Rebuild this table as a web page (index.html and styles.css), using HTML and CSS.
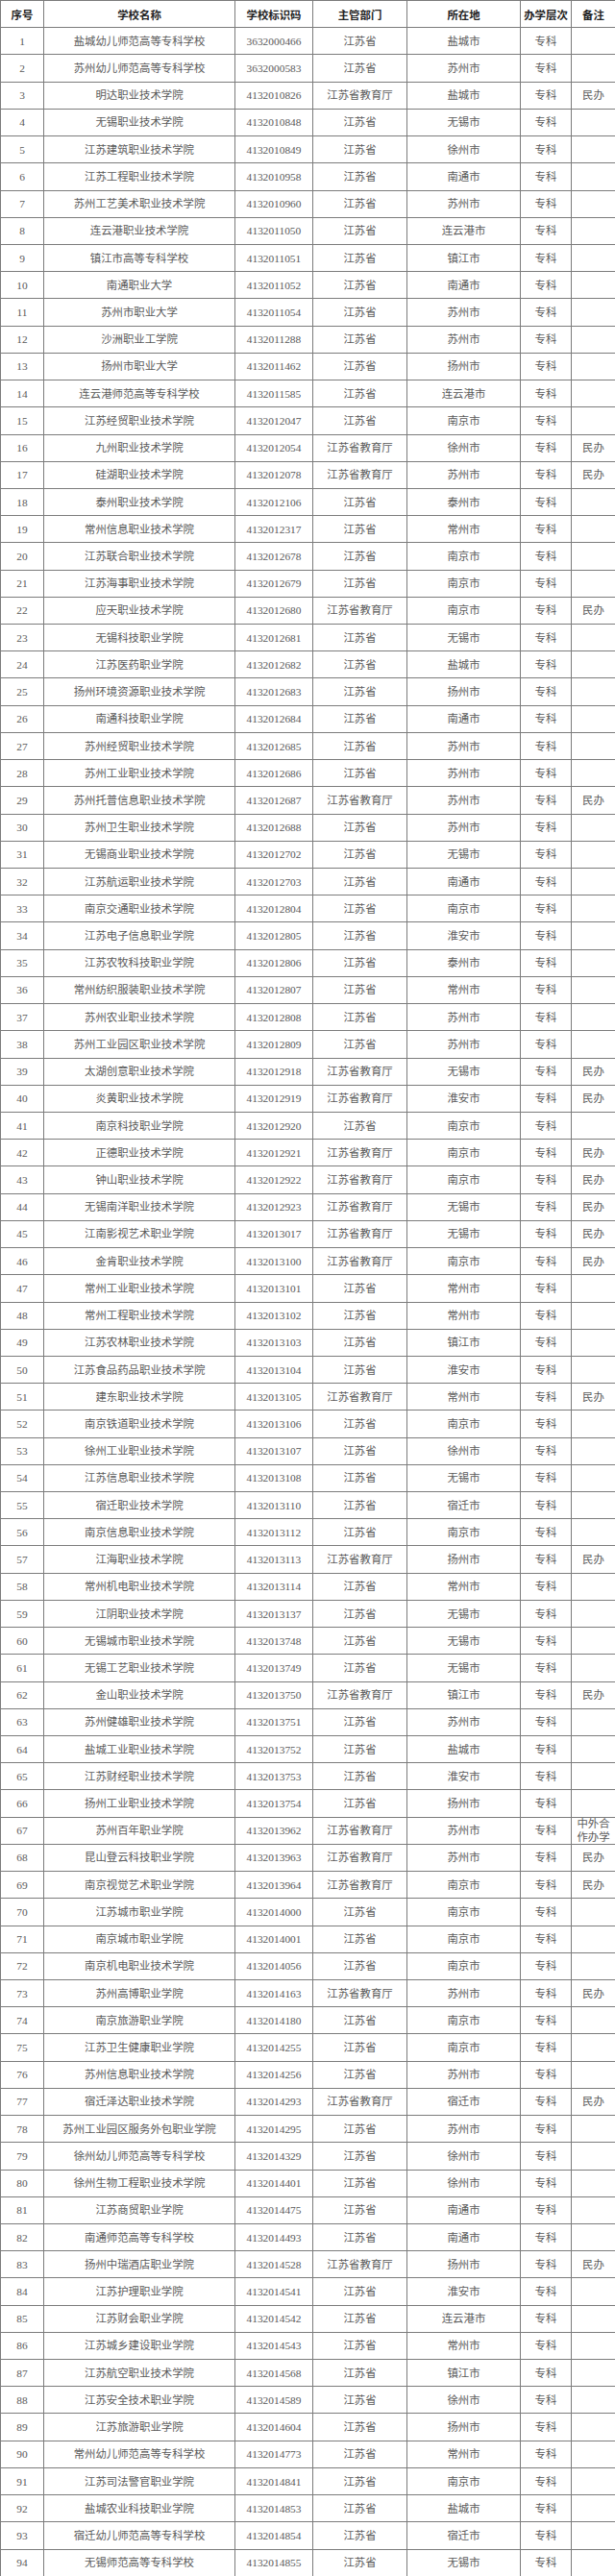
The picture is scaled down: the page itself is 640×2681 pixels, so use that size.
FILE: index.html
```html
<!DOCTYPE html>
<html lang="zh-CN">
<head>
<meta charset="utf-8">
<title>江苏省高职（专科）院校名单</title>
<link rel="stylesheet" href="styles.css">
</head>
<body>
<table class="list">
<colgroup>
<col class="c-no"><col class="c-name"><col class="c-code"><col class="c-dept"><col class="c-city"><col class="c-level"><col class="c-note">
</colgroup>
<thead>
<tr><th>序号</th><th>学校名称</th><th>学校标识码</th><th>主管部门</th><th>所在地</th><th>办学层次</th><th>备注</th></tr>
</thead>
<tbody>
<tr><td>1</td><td>盐城幼儿师范高等专科学校</td><td>3632000466</td><td>江苏省</td><td>盐城市</td><td>专科</td><td></td></tr>
<tr><td>2</td><td>苏州幼儿师范高等专科学校</td><td>3632000583</td><td>江苏省</td><td>苏州市</td><td>专科</td><td></td></tr>
<tr><td>3</td><td>明达职业技术学院</td><td>4132010826</td><td>江苏省教育厅</td><td>盐城市</td><td>专科</td><td>民办</td></tr>
<tr><td>4</td><td>无锡职业技术学院</td><td>4132010848</td><td>江苏省</td><td>无锡市</td><td>专科</td><td></td></tr>
<tr><td>5</td><td>江苏建筑职业技术学院</td><td>4132010849</td><td>江苏省</td><td>徐州市</td><td>专科</td><td></td></tr>
<tr><td>6</td><td>江苏工程职业技术学院</td><td>4132010958</td><td>江苏省</td><td>南通市</td><td>专科</td><td></td></tr>
<tr><td>7</td><td>苏州工艺美术职业技术学院</td><td>4132010960</td><td>江苏省</td><td>苏州市</td><td>专科</td><td></td></tr>
<tr><td>8</td><td>连云港职业技术学院</td><td>4132011050</td><td>江苏省</td><td>连云港市</td><td>专科</td><td></td></tr>
<tr><td>9</td><td>镇江市高等专科学校</td><td>4132011051</td><td>江苏省</td><td>镇江市</td><td>专科</td><td></td></tr>
<tr><td>10</td><td>南通职业大学</td><td>4132011052</td><td>江苏省</td><td>南通市</td><td>专科</td><td></td></tr>
<tr><td>11</td><td>苏州市职业大学</td><td>4132011054</td><td>江苏省</td><td>苏州市</td><td>专科</td><td></td></tr>
<tr><td>12</td><td>沙洲职业工学院</td><td>4132011288</td><td>江苏省</td><td>苏州市</td><td>专科</td><td></td></tr>
<tr><td>13</td><td>扬州市职业大学</td><td>4132011462</td><td>江苏省</td><td>扬州市</td><td>专科</td><td></td></tr>
<tr><td>14</td><td>连云港师范高等专科学校</td><td>4132011585</td><td>江苏省</td><td>连云港市</td><td>专科</td><td></td></tr>
<tr><td>15</td><td>江苏经贸职业技术学院</td><td>4132012047</td><td>江苏省</td><td>南京市</td><td>专科</td><td></td></tr>
<tr><td>16</td><td>九州职业技术学院</td><td>4132012054</td><td>江苏省教育厅</td><td>徐州市</td><td>专科</td><td>民办</td></tr>
<tr><td>17</td><td>硅湖职业技术学院</td><td>4132012078</td><td>江苏省教育厅</td><td>苏州市</td><td>专科</td><td>民办</td></tr>
<tr><td>18</td><td>泰州职业技术学院</td><td>4132012106</td><td>江苏省</td><td>泰州市</td><td>专科</td><td></td></tr>
<tr><td>19</td><td>常州信息职业技术学院</td><td>4132012317</td><td>江苏省</td><td>常州市</td><td>专科</td><td></td></tr>
<tr><td>20</td><td>江苏联合职业技术学院</td><td>4132012678</td><td>江苏省</td><td>南京市</td><td>专科</td><td></td></tr>
<tr><td>21</td><td>江苏海事职业技术学院</td><td>4132012679</td><td>江苏省</td><td>南京市</td><td>专科</td><td></td></tr>
<tr><td>22</td><td>应天职业技术学院</td><td>4132012680</td><td>江苏省教育厅</td><td>南京市</td><td>专科</td><td>民办</td></tr>
<tr><td>23</td><td>无锡科技职业学院</td><td>4132012681</td><td>江苏省</td><td>无锡市</td><td>专科</td><td></td></tr>
<tr><td>24</td><td>江苏医药职业学院</td><td>4132012682</td><td>江苏省</td><td>盐城市</td><td>专科</td><td></td></tr>
<tr><td>25</td><td>扬州环境资源职业技术学院</td><td>4132012683</td><td>江苏省</td><td>扬州市</td><td>专科</td><td></td></tr>
<tr><td>26</td><td>南通科技职业学院</td><td>4132012684</td><td>江苏省</td><td>南通市</td><td>专科</td><td></td></tr>
<tr><td>27</td><td>苏州经贸职业技术学院</td><td>4132012685</td><td>江苏省</td><td>苏州市</td><td>专科</td><td></td></tr>
<tr><td>28</td><td>苏州工业职业技术学院</td><td>4132012686</td><td>江苏省</td><td>苏州市</td><td>专科</td><td></td></tr>
<tr><td>29</td><td>苏州托普信息职业技术学院</td><td>4132012687</td><td>江苏省教育厅</td><td>苏州市</td><td>专科</td><td>民办</td></tr>
<tr><td>30</td><td>苏州卫生职业技术学院</td><td>4132012688</td><td>江苏省</td><td>苏州市</td><td>专科</td><td></td></tr>
<tr><td>31</td><td>无锡商业职业技术学院</td><td>4132012702</td><td>江苏省</td><td>无锡市</td><td>专科</td><td></td></tr>
<tr><td>32</td><td>江苏航运职业技术学院</td><td>4132012703</td><td>江苏省</td><td>南通市</td><td>专科</td><td></td></tr>
<tr><td>33</td><td>南京交通职业技术学院</td><td>4132012804</td><td>江苏省</td><td>南京市</td><td>专科</td><td></td></tr>
<tr><td>34</td><td>江苏电子信息职业学院</td><td>4132012805</td><td>江苏省</td><td>淮安市</td><td>专科</td><td></td></tr>
<tr><td>35</td><td>江苏农牧科技职业学院</td><td>4132012806</td><td>江苏省</td><td>泰州市</td><td>专科</td><td></td></tr>
<tr><td>36</td><td>常州纺织服装职业技术学院</td><td>4132012807</td><td>江苏省</td><td>常州市</td><td>专科</td><td></td></tr>
<tr><td>37</td><td>苏州农业职业技术学院</td><td>4132012808</td><td>江苏省</td><td>苏州市</td><td>专科</td><td></td></tr>
<tr><td>38</td><td>苏州工业园区职业技术学院</td><td>4132012809</td><td>江苏省</td><td>苏州市</td><td>专科</td><td></td></tr>
<tr><td>39</td><td>太湖创意职业技术学院</td><td>4132012918</td><td>江苏省教育厅</td><td>无锡市</td><td>专科</td><td>民办</td></tr>
<tr><td>40</td><td>炎黄职业技术学院</td><td>4132012919</td><td>江苏省教育厅</td><td>淮安市</td><td>专科</td><td>民办</td></tr>
<tr><td>41</td><td>南京科技职业学院</td><td>4132012920</td><td>江苏省</td><td>南京市</td><td>专科</td><td></td></tr>
<tr><td>42</td><td>正德职业技术学院</td><td>4132012921</td><td>江苏省教育厅</td><td>南京市</td><td>专科</td><td>民办</td></tr>
<tr><td>43</td><td>钟山职业技术学院</td><td>4132012922</td><td>江苏省教育厅</td><td>南京市</td><td>专科</td><td>民办</td></tr>
<tr><td>44</td><td>无锡南洋职业技术学院</td><td>4132012923</td><td>江苏省教育厅</td><td>无锡市</td><td>专科</td><td>民办</td></tr>
<tr><td>45</td><td>江南影视艺术职业学院</td><td>4132013017</td><td>江苏省教育厅</td><td>无锡市</td><td>专科</td><td>民办</td></tr>
<tr><td>46</td><td>金肯职业技术学院</td><td>4132013100</td><td>江苏省教育厅</td><td>南京市</td><td>专科</td><td>民办</td></tr>
<tr><td>47</td><td>常州工业职业技术学院</td><td>4132013101</td><td>江苏省</td><td>常州市</td><td>专科</td><td></td></tr>
<tr><td>48</td><td>常州工程职业技术学院</td><td>4132013102</td><td>江苏省</td><td>常州市</td><td>专科</td><td></td></tr>
<tr><td>49</td><td>江苏农林职业技术学院</td><td>4132013103</td><td>江苏省</td><td>镇江市</td><td>专科</td><td></td></tr>
<tr><td>50</td><td>江苏食品药品职业技术学院</td><td>4132013104</td><td>江苏省</td><td>淮安市</td><td>专科</td><td></td></tr>
<tr><td>51</td><td>建东职业技术学院</td><td>4132013105</td><td>江苏省教育厅</td><td>常州市</td><td>专科</td><td>民办</td></tr>
<tr><td>52</td><td>南京铁道职业技术学院</td><td>4132013106</td><td>江苏省</td><td>南京市</td><td>专科</td><td></td></tr>
<tr><td>53</td><td>徐州工业职业技术学院</td><td>4132013107</td><td>江苏省</td><td>徐州市</td><td>专科</td><td></td></tr>
<tr><td>54</td><td>江苏信息职业技术学院</td><td>4132013108</td><td>江苏省</td><td>无锡市</td><td>专科</td><td></td></tr>
<tr><td>55</td><td>宿迁职业技术学院</td><td>4132013110</td><td>江苏省</td><td>宿迁市</td><td>专科</td><td></td></tr>
<tr><td>56</td><td>南京信息职业技术学院</td><td>4132013112</td><td>江苏省</td><td>南京市</td><td>专科</td><td></td></tr>
<tr><td>57</td><td>江海职业技术学院</td><td>4132013113</td><td>江苏省教育厅</td><td>扬州市</td><td>专科</td><td>民办</td></tr>
<tr><td>58</td><td>常州机电职业技术学院</td><td>4132013114</td><td>江苏省</td><td>常州市</td><td>专科</td><td></td></tr>
<tr><td>59</td><td>江阴职业技术学院</td><td>4132013137</td><td>江苏省</td><td>无锡市</td><td>专科</td><td></td></tr>
<tr><td>60</td><td>无锡城市职业技术学院</td><td>4132013748</td><td>江苏省</td><td>无锡市</td><td>专科</td><td></td></tr>
<tr><td>61</td><td>无锡工艺职业技术学院</td><td>4132013749</td><td>江苏省</td><td>无锡市</td><td>专科</td><td></td></tr>
<tr><td>62</td><td>金山职业技术学院</td><td>4132013750</td><td>江苏省教育厅</td><td>镇江市</td><td>专科</td><td>民办</td></tr>
<tr><td>63</td><td>苏州健雄职业技术学院</td><td>4132013751</td><td>江苏省</td><td>苏州市</td><td>专科</td><td></td></tr>
<tr><td>64</td><td>盐城工业职业技术学院</td><td>4132013752</td><td>江苏省</td><td>盐城市</td><td>专科</td><td></td></tr>
<tr><td>65</td><td>江苏财经职业技术学院</td><td>4132013753</td><td>江苏省</td><td>淮安市</td><td>专科</td><td></td></tr>
<tr><td>66</td><td>扬州工业职业技术学院</td><td>4132013754</td><td>江苏省</td><td>扬州市</td><td>专科</td><td></td></tr>
<tr><td>67</td><td>苏州百年职业学院</td><td>4132013962</td><td>江苏省教育厅</td><td>苏州市</td><td>专科</td><td class="wrap"><div class="note-box">中外合作办学</div></td></tr>
<tr><td>68</td><td>昆山登云科技职业学院</td><td>4132013963</td><td>江苏省教育厅</td><td>苏州市</td><td>专科</td><td>民办</td></tr>
<tr><td>69</td><td>南京视觉艺术职业学院</td><td>4132013964</td><td>江苏省教育厅</td><td>南京市</td><td>专科</td><td>民办</td></tr>
<tr><td>70</td><td>江苏城市职业学院</td><td>4132014000</td><td>江苏省</td><td>南京市</td><td>专科</td><td></td></tr>
<tr><td>71</td><td>南京城市职业学院</td><td>4132014001</td><td>江苏省</td><td>南京市</td><td>专科</td><td></td></tr>
<tr><td>72</td><td>南京机电职业技术学院</td><td>4132014056</td><td>江苏省</td><td>南京市</td><td>专科</td><td></td></tr>
<tr><td>73</td><td>苏州高博职业学院</td><td>4132014163</td><td>江苏省教育厅</td><td>苏州市</td><td>专科</td><td>民办</td></tr>
<tr><td>74</td><td>南京旅游职业学院</td><td>4132014180</td><td>江苏省</td><td>南京市</td><td>专科</td><td></td></tr>
<tr><td>75</td><td>江苏卫生健康职业学院</td><td>4132014255</td><td>江苏省</td><td>南京市</td><td>专科</td><td></td></tr>
<tr><td>76</td><td>苏州信息职业技术学院</td><td>4132014256</td><td>江苏省</td><td>苏州市</td><td>专科</td><td></td></tr>
<tr><td>77</td><td>宿迁泽达职业技术学院</td><td>4132014293</td><td>江苏省教育厅</td><td>宿迁市</td><td>专科</td><td>民办</td></tr>
<tr><td>78</td><td>苏州工业园区服务外包职业学院</td><td>4132014295</td><td>江苏省</td><td>苏州市</td><td>专科</td><td></td></tr>
<tr><td>79</td><td>徐州幼儿师范高等专科学校</td><td>4132014329</td><td>江苏省</td><td>徐州市</td><td>专科</td><td></td></tr>
<tr><td>80</td><td>徐州生物工程职业技术学院</td><td>4132014401</td><td>江苏省</td><td>徐州市</td><td>专科</td><td></td></tr>
<tr><td>81</td><td>江苏商贸职业学院</td><td>4132014475</td><td>江苏省</td><td>南通市</td><td>专科</td><td></td></tr>
<tr><td>82</td><td>南通师范高等专科学校</td><td>4132014493</td><td>江苏省</td><td>南通市</td><td>专科</td><td></td></tr>
<tr><td>83</td><td>扬州中瑞酒店职业学院</td><td>4132014528</td><td>江苏省教育厅</td><td>扬州市</td><td>专科</td><td>民办</td></tr>
<tr><td>84</td><td>江苏护理职业学院</td><td>4132014541</td><td>江苏省</td><td>淮安市</td><td>专科</td><td></td></tr>
<tr><td>85</td><td>江苏财会职业学院</td><td>4132014542</td><td>江苏省</td><td>连云港市</td><td>专科</td><td></td></tr>
<tr><td>86</td><td>江苏城乡建设职业学院</td><td>4132014543</td><td>江苏省</td><td>常州市</td><td>专科</td><td></td></tr>
<tr><td>87</td><td>江苏航空职业技术学院</td><td>4132014568</td><td>江苏省</td><td>镇江市</td><td>专科</td><td></td></tr>
<tr><td>88</td><td>江苏安全技术职业学院</td><td>4132014589</td><td>江苏省</td><td>徐州市</td><td>专科</td><td></td></tr>
<tr><td>89</td><td>江苏旅游职业学院</td><td>4132014604</td><td>江苏省</td><td>扬州市</td><td>专科</td><td></td></tr>
<tr><td>90</td><td>常州幼儿师范高等专科学校</td><td>4132014773</td><td>江苏省</td><td>常州市</td><td>专科</td><td></td></tr>
<tr><td>91</td><td>江苏司法警官职业学院</td><td>4132014841</td><td>江苏省</td><td>南京市</td><td>专科</td><td></td></tr>
<tr><td>92</td><td>盐城农业科技职业学院</td><td>4132014853</td><td>江苏省</td><td>盐城市</td><td>专科</td><td></td></tr>
<tr><td>93</td><td>宿迁幼儿师范高等专科学校</td><td>4132014854</td><td>江苏省</td><td>宿迁市</td><td>专科</td><td></td></tr>
<tr><td>94</td><td>无锡师范高等专科学校</td><td>4132014855</td><td>江苏省</td><td>无锡市</td><td>专科</td><td></td></tr>
</tbody>
</table>
</body>
</html>
```

FILE: styles.css
```css
html, body {
  margin: 0;
  padding: 0;
  background: #ffffff;
}

.list {
  width: 640px;
  border-collapse: collapse;
  table-layout: fixed;
  font-family: "Liberation Serif", "Noto Sans CJK SC", serif;
  font-size: 11.4px;
  color: #5a5a5a;
}

.c-no { width: 45px; }
.c-name { width: 199px; }
.c-code { width: 81px; }
.c-dept { width: 98px; }
.c-city { width: 118px; }
.c-level { width: 53px; }
.c-note { width: 46px; }

.list tr {
  height: 28.22px;
}

.list th,
.list td {
  border: 1px solid #7c7c7c;
  padding: 0;
  text-align: center;
  vertical-align: middle;
  white-space: nowrap;
  overflow: hidden;
  line-height: 14px;
}

.list th {
  font-family: "Noto Sans CJK SC", sans-serif;
  font-weight: 700;
  font-size: 11.4px;
  color: #222222;
}

.list td.wrap {
  white-space: normal;
  overflow: visible;
}

.note-box {
  height: 20px;
  margin: 0 auto;
  width: 36px;
  line-height: 14px;
  margin-top: -8px;
}
```
